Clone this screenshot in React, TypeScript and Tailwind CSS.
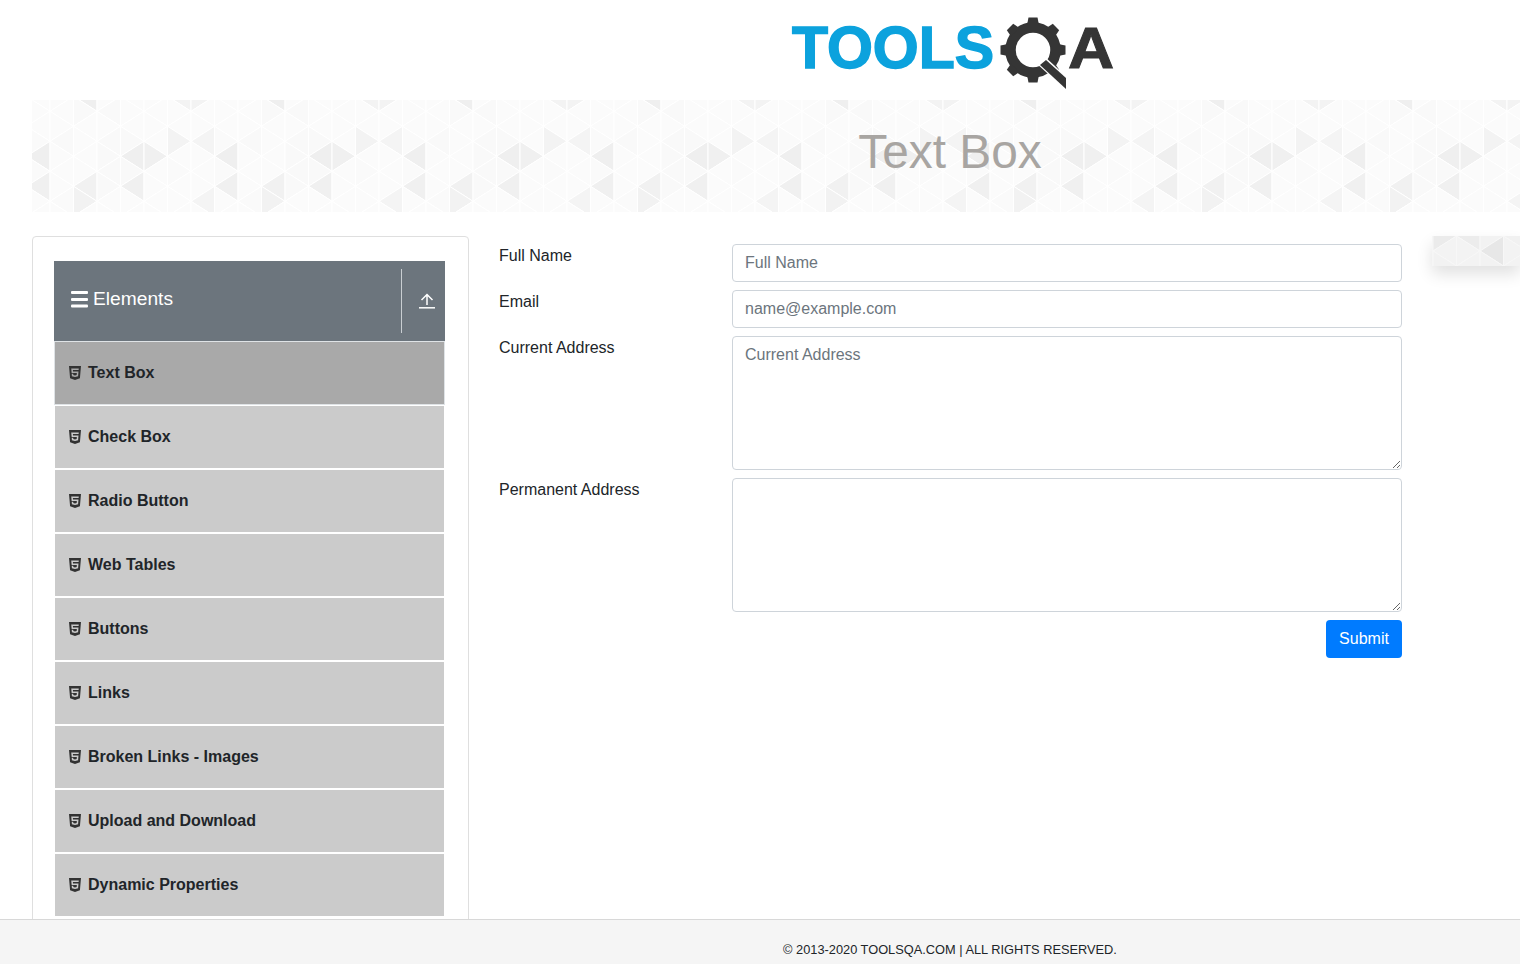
import { FaHtml5 } from "react-icons/fa";

const MENU_ITEMS = [
  "Text Box",
  "Check Box",
  "Radio Button",
  "Web Tables",
  "Buttons",
  "Links",
  "Broken Links - Images",
  "Upload and Download",
  "Dynamic Properties",
];

// shaded triangles of the 188px wide tile: column, row, direction, fill
const SHADES: [number, number, number, string][] = [
  [4, 3, 1, "#f0f0f0"],
  [4, 3, -1, "#efefef"],
  [0, 3, -1, "#efefef"],
  [4, 5, -1, "#f0f0f0"],
  [0, 5, -1, "#f0f0f0"],
  [2, 5, -1, "#f1f1f1"],
  [1, 6, 1, "#f2f2f2"],
  [7, 6, -1, "#f4f4f4"],
  [5, 2, 1, "#f3f3f3"],
  [7, 2, -1, "#f4f4f4"],
  [2, -1, -1, "#efefef"],
  [6, -1, -1, "#f3f3f3"],
  [6, -1, 1, "#f3f3f3"],
  [1, 0, 1, "#f9f9f9"],
  [3, 0, -1, "#f9f9f9"],
  [1, 2, -1, "#f9f9f9"],
  [3, 2, -1, "#f9f9f9"],
  [3, 2, 1, "#f9f9f9"],
  [2, 3, 1, "#f9f9f9"],
  [3, 4, -1, "#f9f9f9"],
  [3, 4, 1, "#f9f9f9"],
  [5, 4, 1, "#fafafa"],
  [7, 4, 1, "#fafafa"],
  [7, 2, 1, "#fafafa"],
  [2, 5, 1, "#f9f9f9"],
  [1, 6, -1, "#fafafa"],
];

function Triangles({ viewBox, className }: { viewBox: string; className: string }) {
  const shapes = [];
  for (let r = -1; r <= 7; r++) {
    for (let i = -2; i <= 64; i++) {
      if ((i + r + 200) % 2 === 0) continue;
      for (const dir of [-1, 1]) {
        const shade = SHADES.find(
          (s) => s[0] === ((i % 8) + 8) % 8 && s[1] === r && s[2] === dir,
        );
        const x = 18 + 23.5 * i;
        const y = 11.3 + 15 * r;
        shapes.push(
          <polygon
            key={`${i}-${r}-${dir}`}
            points={`${x},${y - 15} ${x},${y + 15} ${x + dir * 23.5},${y}`}
            fill={shade ? shade[3] : "#fbfbfb"}
            stroke="#ffffff"
            strokeWidth="1"
          />,
        );
      }
    }
  }
  return (
    <svg viewBox={viewBox} preserveAspectRatio="none" className={className}>
      {shapes}
    </svg>
  );
}

function GearLogo() {
  return (
    <svg viewBox="0 0 68 74" className="mt-[-2px] h-[74px] w-[68px] shrink-0">
      <circle cx="33" cy="34" r="22.5" fill="none" stroke="#353535" strokeWidth="10.5" />
      {[0, 45, 90, 135, 180, 225, 270, 315].map((deg) => (
        <polygon
          key={deg}
          points="27,9 39,9 37.5,1.5 28.5,1.5"
          fill="#353535"
          transform={`rotate(${deg} 33 34)`}
        />
      ))}
      <polygon points="44,40 68,62 68,76 36,47" fill="#ffffff" />
      <polygon points="46,44 66,62 66,73 40,49" fill="#353535" />
    </svg>
  );
}

function MenuIcon() {
  return (
    <svg viewBox="0 0 17 17" className="h-[17px] w-[17px] shrink-0" fill="#ffffff">
      <rect x="0" y="0" width="17" height="3" rx="1" />
      <rect x="0" y="7" width="17" height="3" rx="1" />
      <rect x="0" y="13.5" width="17" height="3" rx="1" />
    </svg>
  );
}

function UploadIcon() {
  return (
    <svg viewBox="0 0 16 16" className="ml-1.5 h-4 w-4" fill="none" stroke="#ffffff" strokeWidth="1.5">
      <path d="M8 12V1.5M2.5 7l5.5-5.5L13.5 7" />
      <path d="M0 14.8h16" />
    </svg>
  );
}

function Field({ label, children }: { label: string; children: React.ReactNode }) {
  return (
    <div className="mb-2 flex">
      <label className="w-[233px] shrink-0 leading-6 text-[#212529]">{label}</label>
      {children}
    </div>
  );
}

export default function App() {
  const inputClass =
    "h-[38px] w-[670px] rounded border border-[#ced4da] bg-white px-3 text-[#495057] placeholder:text-[#6c757d]";
  const areaClass =
    "block h-[134px] w-[670px] rounded border border-[#ced4da] bg-white px-3 py-1.5 text-[#495057] placeholder:text-[#6c757d]";

  return (
    <div className="relative h-[964px] overflow-hidden bg-white font-['Liberation_Sans',Arial,sans-serif] text-base">
      <header className="flex h-[100px] items-start pl-[792px] pt-[18px]">
        <span className="h-[60px] w-[208px] text-[59px] leading-[60px] font-bold tracking-[0px] text-[#0ca2dd] [-webkit-text-stroke:1.5px_#0ca2dd]">
          TOOLS
        </span>
        <GearLogo />
        <span className="h-[60px] origin-left scale-x-[1.12] text-[57px] leading-[60px] font-bold text-[#353535] [-webkit-text-stroke:1px_#353535]">
          A
        </span>
      </header>

      <div className="relative ml-8 flex h-28 items-center justify-center overflow-hidden pl-[348px]">
        <Triangles viewBox="0 0 1488 112" className="absolute inset-0 h-28 w-[1488px] blur-[0.6px]" />
        <h1 className="relative pb-2 text-[47.8px] leading-none text-[#a8a5a2]">Text Box</h1>
      </div>

      <main className="ml-8 mt-6 flex items-start">
        <aside className="w-[437px] shrink-0 rounded border border-[#dfdfdf] pb-6 pl-[21px] pr-[23px] pt-6">
          <div className="flex h-20 items-center justify-between bg-[#6c757d] text-white">
            <div className="flex items-center gap-[5px] pb-1 pl-[17px]">
              <MenuIcon />
              <span className="text-[19.2px] leading-6">Elements</span>
            </div>
            <div className="flex h-16 w-11 items-center justify-center border-l border-[#c9ced2]">
              <UploadIcon />
            </div>
          </div>
          {MENU_ITEMS.map((item, index) => (
            <div
              key={item}
              className={
                index === 0
                  ? "flex h-16 items-center border border-[#dfe3e6] bg-[#a9a9a9] pl-3.5 font-bold text-[#212529]"
                  : "flex h-16 items-center border border-white bg-[#cbcbcb] pl-3.5 font-bold text-[#212529]"
              }
            >
              <FaHtml5 className="mr-[7px] h-4 w-3 shrink-0 text-[#333333]" />
              <span>{item}</span>
            </div>
          ))}
        </aside>

        <form className="ml-[30px] pt-2">
          <Field label="Full Name">
            <input className={inputClass} placeholder="Full Name" />
          </Field>
          <Field label="Email">
            <input className={inputClass} placeholder="name@example.com" />
          </Field>
          <Field label="Current Address">
            <textarea className={areaClass} placeholder="Current Address" />
          </Field>
          <Field label="Permanent Address">
            <textarea className={areaClass} />
          </Field>
          <div className="flex justify-end">
            <button
              type="button"
              className="h-[38px] w-[76px] rounded bg-[#007bff] text-white"
            >
              Submit
            </button>
          </div>
        </form>
      </main>

      {/* floating strip at the right edge */}
      <div className="absolute left-[1432px] top-[236px] h-[30px] w-[88px] shadow-[0_8px_16px_rgba(0,0,0,0.12)]">
        <Triangles viewBox="134.5 41.3 88 30" className="h-[30px] w-[88px] blur-[0.6px]" />
        <div className="absolute inset-0 bg-black/[0.03]" />
      </div>

      <footer className="absolute bottom-0 left-0 right-0 flex h-[45px] items-center justify-center border-t border-[#d8d8d8] bg-[#f5f5f5] pl-[380px] pt-[15px] text-[12.8px] text-[#212529]">
        © 2013-2020 TOOLSQA.COM | ALL RIGHTS RESERVED.
      </footer>
    </div>
  );
}
